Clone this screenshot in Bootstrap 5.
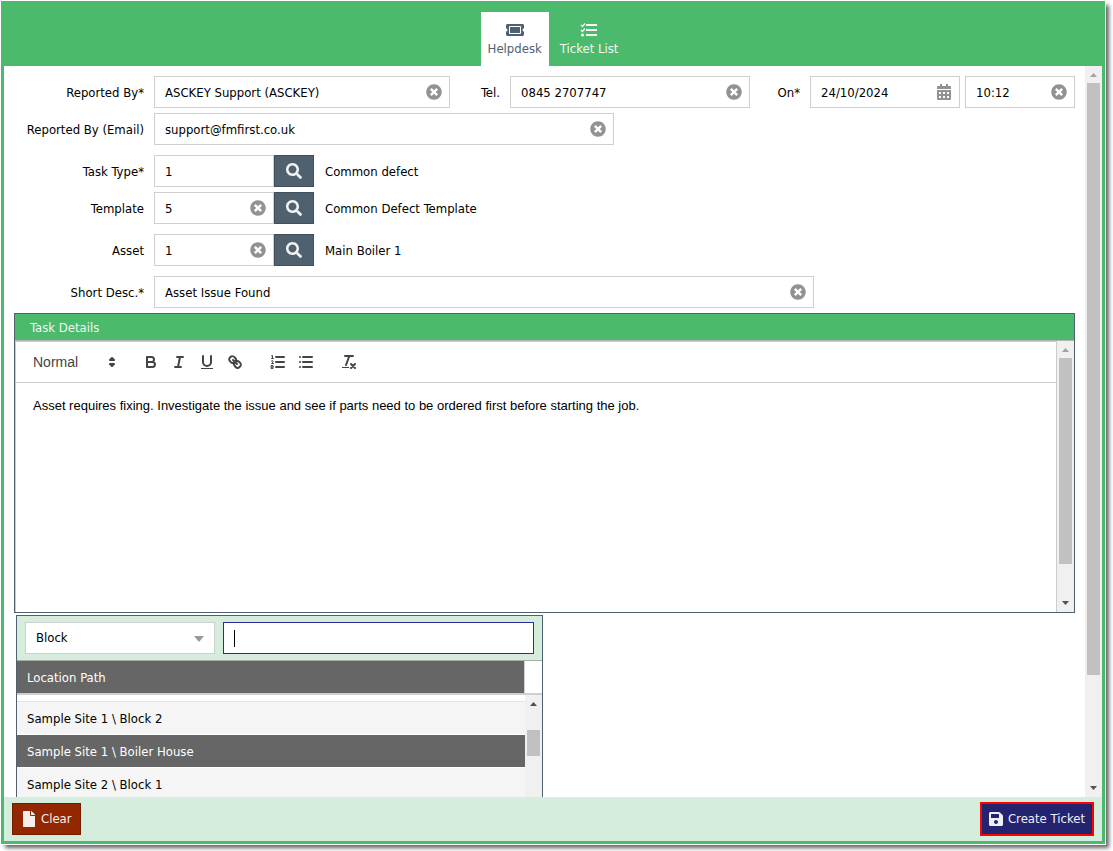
<!DOCTYPE html>
<html lang="en">
<head>
<meta charset="utf-8">
<meta name="viewport" content="width=device-width, initial-scale=1">
<title>Helpdesk</title>
<link rel="stylesheet" href="https://cdn.jsdelivr.net/npm/bootstrap@5.3.0/dist/css/bootstrap.min.css">
<style>
:root { --green: #4bba6c; --mint: #d5eddd; --slate: #4f616f; --line: #cfcfcf; --icon: #929292; }
body { height: 100vh; padding: 1px 8px 7px 1px; background: #fff; color: #000; overflow: hidden;
  font-family: Tahoma, "DejaVu Sans Condensed", "Noto Sans", sans-serif; font-size: 13px; line-height: 18px; }
button, input, select { font: inherit; color: inherit; }
svg { display: block; flex: none; }
.app-frame { min-height: 0; border: 3px solid var(--green); border-top: 0; box-shadow: 0 0 0 1px #fff, 4px 4px 4px 0 #666; background: #fff; }
.app-head { background: var(--green); padding-top: 11px; gap: 4px; }
.app-tab { padding: 10px 7px 8px; gap: 2px; color: #f3f8f4; text-decoration: none; }
.app-tab.active { background: #fff; color: var(--slate); }
.app-main { min-height: 0; }
.page-area { padding: 10px 10px 0; overflow: hidden; }
.form-line { display: grid; grid-template-columns: 130px minmax(0, 1fr); column-gap: 10px; align-items: center; margin-bottom: 10px; }
.form-line.tight { margin-bottom: 5px; }
.form-line > label, .label-cell { text-align: right; }
.form-line label, .look-note { padding-top: 1px; }
.first-line { grid-template-columns: minmax(0, 1fr) 40px 240px 40px 150px 105px; display: grid; column-gap: 10px; align-items: center; }
.first-line .time-box { margin-left: -5px; }
.field-box { display: flex; align-items: center; height: 32px; border: 1px solid var(--line); background: #fff; }
.field-box input { flex: 1 1 0; min-width: 0; height: 30px; border: 0; padding: 0 0 0 10px; outline: 0; background: transparent; }
.icon-btn { border: 0; background: transparent; padding: 0 7px; color: var(--icon); }
.email-box { max-width: 460px; }
.desc-box { max-width: 660px; }
.code-box { width: 120px; }
.look-btn { width: 40px; height: 32px; border: 1px solid #414f5c; background: var(--slate); color: #f3f3f3; padding: 0 11px; margin-right: 11px; }
.sbar { width: 17px; background: #f0f0f0; }
.sbar-track { min-height: 0; padding: 0 2px; }
.sbar-thumb { background: #c1c1c1; }
.sbar svg { width: 17px; height: 17px; fill: #505050; }
.sbar svg.idle { fill: #a3a3a3; }
.editor-card { border: 1px solid var(--slate); margin-top: -5px; }
.editor-title { background: var(--green); color: #eef7f0; padding: 5px 15px 3px; border-bottom: 1px solid #b4b4b4; margin: 0; font-size: 13px; line-height: 18px; font-weight: 400; }
.editor-pane { height: 271px; }
.editor-inner { border: solid #ccc; border-width: 0 1px; }
.editor-tools { border: solid #ccc; border-width: 1px 0; padding: 8px; color: #444; }
.editor-tools select { width: 98px; height: 24px; padding: 0 9px; border: 0; appearance: none; background: transparent; font: 14px "Liberation Sans", Arial, sans-serif; }
.size-pick { position: relative; margin-right: 15px; }
.size-pick svg { position: absolute; right: 1px; top: 3px; pointer-events: none; }
.tool-set { margin-right: 15px; }
.tool-set button { border: 0; background: transparent; padding: 3px 5px; width: 28px; height: 24px; color: inherit; }
.tool-svg { width: 18px; height: 18px; fill: none; stroke: currentColor; stroke-width: 2; stroke-linecap: round; stroke-linejoin: round; }
.editor-text { padding: 14px 17px; font: 13px/18px "Liberation Sans", Arial, sans-serif; outline: 0; }
.loc-card { width: 527px; margin: 2px 0 0 2px; border: 1px solid var(--slate); }
.loc-filter { background: var(--mint); padding: 6px 8px; border-bottom: 1px solid #aaa; gap: 8px; }
.loc-kind { position: relative; width: 190px; }
.loc-kind select { width: 100%; height: 32px; border: 1px solid var(--line); background: #fff; appearance: none; padding: 0 10px; outline: 0; }
.loc-kind svg { position: absolute; right: 11px; top: 14px; fill: #999; pointer-events: none; }
.loc-find { position: relative; }
.loc-find input { width: 100%; height: 32px; border: 1px solid #2b2b96; padding: 0 10px; outline: 0; caret-color: transparent; background: #fff; }
.loc-find i { position: absolute; left: 11px; top: 8px; width: 1px; height: 17px; background: #000; }
.loc-table { width: 100%; border-collapse: separate; border-spacing: 0; }
.loc-table th { background: #666; color: #fff; font-weight: 400; height: 34px; padding: 2px 10px 0; border-bottom: 2px solid var(--line); }
.loc-table td { height: 33px; padding: 2px 10px 0; background: #f5f5f5; border-bottom: 1px solid #fff; }
.loc-table .gap-row td { height: 7px; background: #fff; border-bottom: 1px solid #e4e4e4; padding: 0; }
.loc-table .picked td { background: #666; color: #fff; }
.loc-corner { height: 34px; border-bottom: 2px solid var(--line); border-left: 1px solid var(--line); margin-left: -1px; background: #fff; }
.loc-track { padding-top: 18px; }
.app-foot { background: var(--mint); padding: 5px 8px; height: 44px; }
.act-btn { border-radius: 0; gap: 6px; height: 32px; padding: 0 8px 0 10px; font-size: 13px; line-height: 18px; }
.act-clear, .act-clear:hover { background: #932700; border: 1px solid #741e00; color: #f5eeee; }
.act-save, .act-save:hover { height: 34px; padding: 0 7px; background: #232370; border: 2px solid #f00; color: #efeff7; gap: 5px; }
</style>
</head>
<body class="d-flex flex-column">
<svg class="d-none" aria-hidden="true">
  <symbol id="i-x" viewBox="0 0 512 512"><path d="M256 8C119 8 8 119 8 256s111 248 248 248 248-111 248-248S393 8 256 8zm121.600 313.100c4.700 4.700 4.700 12.300 0 17L338 377.600c-4.700 4.700-12.300 4.700-17 0L256 312l-65.100 65.600c-4.700 4.700-12.300 4.700-17 0L134.400 338c-4.700-4.700-4.700-12.300 0-17l65.600-65-65.600-65.100c-4.700-4.700-4.700-12.300 0-17l39.600-39.600c4.700-4.700 12.300-4.700 17 0l65 65.700 65.100-65.600c4.700-4.700 12.300-4.700 17 0l39.600 39.600c4.700 4.700 4.700 12.300 0 17L312 256l65.600 65.100z"/></symbol>
  <symbol id="i-find" viewBox="0 0 512 512"><path d="M505 442.700L405.300 343c-4.500-4.500-10.600-7-17-7H372c27.600-35.300 44-79.700 44-128C416 93.100 322.900 0 208 0S0 93.100 0 208s93.100 208 208 208c48.300 0 92.700-16.400 128-44v16.300c0 6.400 2.500 12.500 7 17l99.700 99.700c9.400 9.400 24.600 9.400 33.900 0l28.300-28.300c9.400-9.400 9.400-24.600.1-34zM208 336c-70.700 0-128-57.200-128-128 0-70.700 57.200-128 128-128 70.700 0 128 57.200 128 128 0 70.700-57.200 128-128 128z"/></symbol>
  <symbol id="s-up" viewBox="0 0 17 17"><path d="M5 11h7L8.500 7z"/></symbol>
  <symbol id="s-down" viewBox="0 0 17 17"><path d="M5 6h7L8.500 10z"/></symbol>
</svg>

<div class="app-frame d-flex flex-column flex-grow-1 w-100">
  <nav class="app-head d-flex justify-content-center">
    <a href="#" class="app-tab active d-flex flex-column align-items-center" aria-current="page">
      <svg width="18" height="16" viewBox="0 0 576 512" fill="currentColor"><path d="M128 160h320v192H128V160zm400 96c0 26.510 21.490 48 48 48v96c0 26.510-21.490 48-48 48H48c-26.510 0-48-21.490-48-48v-96c26.510 0 48-21.490 48-48s-21.490-48-48-48v-96c0-26.510 21.490-48 48-48h480c26.510 0 48 21.490 48 48v96c-26.510 0-48 21.490-48 48zm-48-104c0-13.255-10.745-24-24-24H120c-13.255 0-24 10.745-24 24v208c0 13.255 10.745 24 24 24h336c13.255 0 24-10.745 24-24V152z"/></svg>
      <span>Helpdesk</span>
    </a>
    <a href="#" class="app-tab d-flex flex-column align-items-center">
      <svg width="18" height="16" viewBox="0 0 18 16" fill="currentColor"><rect x="6" y="2" width="11" height="2"/><rect x="6" y="7" width="11" height="2"/><rect x="6" y="12" width="11" height="2"/><circle cx="2.500" cy="13" r="1.600"/><path d="M1 3l1.500 1.500L5 1.500M1 8l1.500 1.500L5 6.500" fill="none" stroke="currentColor" stroke-width="1.400"/></svg>
      <span>Ticket List</span>
    </a>
  </nav>

  <main class="app-main d-flex flex-grow-1">
    <form class="page-area flex-grow-1" id="ticket">
      <div class="form-line tight">
        <label for="by">Reported By*</label>
        <div class="first-line">
          <div class="field-box"><input id="by" value="ASCKEY Support (ASCKEY)"><button type="button" class="icon-btn" aria-label="Clear reporter"><svg width="16" height="16" fill="currentColor"><use href="#i-x"/></svg></button></div>
          <label class="label-cell" for="tel">Tel.</label>
          <div class="field-box"><input id="tel" value="0845 2707747"><button type="button" class="icon-btn" aria-label="Clear telephone"><svg width="16" height="16" fill="currentColor"><use href="#i-x"/></svg></button></div>
          <label class="label-cell" for="day">On*</label>
          <div class="field-box"><input id="day" value="24/10/2024"><button type="button" class="icon-btn" aria-label="Open calendar"><svg width="16" height="16" viewBox="0 0 16 16" fill="currentColor"><path fill-rule="evenodd" d="M4 0h2v2h4V0h2v2h2a1 1 0 0 1 1 1v2H1V3a1 1 0 0 1 1-1h2zM1 6h14v9a1 1 0 0 1-1 1H2a1 1 0 0 1-1-1zM3 8v2h2V8zm4 0v2h2V8zm4 0v2h2V8zM3 12v2h2v-2zm4 0v2h2v-2zm4 0v2h2v-2z"/></svg></button></div>
          <div class="field-box time-box"><input id="time" aria-label="Time" value="10:12"><button type="button" class="icon-btn" aria-label="Clear time"><svg width="16" height="16" fill="currentColor"><use href="#i-x"/></svg></button></div>
        </div>
      </div>
      <div class="form-line">
        <label for="mail">Reported By (Email)</label>
        <div class="field-box email-box"><input id="mail" value="support@fmfirst.co.uk"><button type="button" class="icon-btn" aria-label="Clear email"><svg width="16" height="16" fill="currentColor"><use href="#i-x"/></svg></button></div>
      </div>
      <div class="form-line tight">
        <label for="type">Task Type*</label>
        <div class="d-flex align-items-center"><div class="field-box code-box"><input id="type" value="1"></div><button type="button" class="look-btn" aria-label="Find task type"><svg width="16" height="16" fill="currentColor"><use href="#i-find"/></svg></button><span class="look-note">Common defect</span></div>
      </div>
      <div class="form-line">
        <label for="tpl">Template</label>
        <div class="d-flex align-items-center"><div class="field-box code-box"><input id="tpl" value="5"><button type="button" class="icon-btn" aria-label="Clear template"><svg width="16" height="16" fill="currentColor"><use href="#i-x"/></svg></button></div><button type="button" class="look-btn" aria-label="Find template"><svg width="16" height="16" fill="currentColor"><use href="#i-find"/></svg></button><span class="look-note">Common Defect Template</span></div>
      </div>
      <div class="form-line">
        <label for="asset">Asset</label>
        <div class="d-flex align-items-center"><div class="field-box code-box"><input id="asset" value="1"><button type="button" class="icon-btn" aria-label="Clear asset"><svg width="16" height="16" fill="currentColor"><use href="#i-x"/></svg></button></div><button type="button" class="look-btn" aria-label="Find asset"><svg width="16" height="16" fill="currentColor"><use href="#i-find"/></svg></button><span class="look-note">Main Boiler 1</span></div>
      </div>
      <div class="form-line">
        <label for="desc">Short Desc.*</label>
        <div class="field-box desc-box"><input id="desc" value="Asset Issue Found"><button type="button" class="icon-btn" aria-label="Clear description"><svg width="16" height="16" fill="currentColor"><use href="#i-x"/></svg></button></div>
      </div>

      <section class="editor-card">
        <h2 class="editor-title">Task Details</h2>
        <div class="editor-pane d-flex">
          <div class="editor-inner flex-grow-1">
            <div class="editor-tools d-flex">
              <div class="size-pick"><select aria-label="Text style"><option>Normal</option></select>
                <svg class="tool-svg" viewBox="0 0 18 18"><path fill="currentColor" d="M7 11l2 2 2-2zM7 7l2-2 2 2z"/></svg></div>
              <div class="tool-set d-flex">
                <button type="button" aria-label="Bold"><svg class="tool-svg" viewBox="0 0 18 18"><path d="M5 4h4.500a2.500 2.500 0 0 1 0 5H5zM5 9h5.500a2.500 2.500 0 0 1 0 5H5z"/></svg></button>
                <button type="button" aria-label="Italic"><svg class="tool-svg" viewBox="0 0 18 18"><path d="M7 4h6M5 14h6M8 14l2-10"/></svg></button>
                <button type="button" aria-label="Underline"><svg class="tool-svg" viewBox="0 0 18 18"><path d="M5 3v6a4 4 0 0 0 8 0V3"/><rect x="3" y="15" width="12" height="1" fill="currentColor" stroke="none"/></svg></button>
                <button type="button" aria-label="Link"><svg class="tool-svg" viewBox="0 0 18 18"><path d="M7 7l4 4M8.900 4.577a3.476 3.476 0 0 1 .36 4.679A3.476 3.476 0 0 1 4.577 8.900C3.185 7.500 2.035 6.400 4.217 4.217S7.500 3.185 8.900 4.577zM13.423 9.100a3.476 3.476 0 0 0-4.679-.36 3.476 3.476 0 0 0 .36 4.679c1.392 1.392 2.500 2.542 4.679.36S14.815 10.500 13.423 9.100z"/></svg></button>
              </div>
              <div class="tool-set d-flex">
                <button type="button" aria-label="Numbered list"><svg class="tool-svg" viewBox="0 0 18 18"><path d="M7 4h8M7 9h8M7 14h8"/><path stroke-width="1" d="M2.500 3l1-.5v3M2.500 5.500h2M2.500 8q1.500-1 1.700 0t-1.700 2.500h2M2.500 12.500h1.500v3H2.500zM2.500 14h1.500"/></svg></button>
                <button type="button" aria-label="Bulleted list"><svg class="tool-svg" viewBox="0 0 18 18"><path d="M6 4h9M6 9h9M6 14h9M3 4h0M3 9h0M3 14h0"/></svg></button>
              </div>
              <div class="tool-set d-flex">
                <button type="button" aria-label="Clear formatting"><svg class="tool-svg" viewBox="0 0 18 18"><path d="M5 3h8M6 12l3.350-9M11 11l4 4M15 11l-4 4"/><rect x="2" y="14" width="7" height="1" fill="currentColor" stroke="none"/></svg></button>
              </div>
            </div>
            <div class="editor-text" contenteditable="true" role="textbox" aria-label="Task details" spellcheck="false">Asset requires fixing. Investigate the issue and see if parts need to be ordered first before starting the job.</div>
          </div>
          <div class="sbar d-flex flex-column" aria-hidden="true">
            <svg class="idle"><use href="#s-up"/></svg>
            <div class="sbar-track flex-grow-1"><div class="sbar-thumb" style="height:87%"></div></div>
            <svg><use href="#s-down"/></svg>
          </div>
        </div>
      </section>

      <section class="loc-card">
        <div class="loc-filter d-flex">
          <div class="loc-kind"><select aria-label="Location kind"><option>Block</option></select><svg width="10" height="6"><path d="M0 0h10L5 6z"/></svg></div>
          <div class="loc-find flex-grow-1"><input aria-label="Search locations"><i></i></div>
        </div>
        <div class="d-flex">
          <div class="flex-grow-1">
            <table class="loc-table">
              <thead><tr><th scope="col">Location Path</th></tr></thead>
              <tbody>
                <tr class="gap-row"><td></td></tr>
                <tr><td>Sample Site 1 \ Block 2</td></tr>
                <tr class="picked"><td>Sample Site 1 \ Boiler House</td></tr>
                <tr><td>Sample Site 2 \ Block 1</td></tr>
              </tbody>
            </table>
          </div>
          <div class="sbar d-flex flex-column" aria-hidden="true">
            <div class="loc-corner"></div>
            <svg><use href="#s-up"/></svg>
            <div class="sbar-track loc-track flex-grow-1"><div class="sbar-thumb" style="height:26px"></div></div>
          </div>
        </div>
      </section>
    </form>
    <div class="sbar d-flex flex-column flex-shrink-0" aria-hidden="true">
      <svg class="idle"><use href="#s-up"/></svg>
      <div class="sbar-track flex-grow-1"><div class="sbar-thumb" style="height:85%"></div></div>
      <svg><use href="#s-down"/></svg>
    </div>
  </main>

  <footer class="app-foot d-flex justify-content-between align-items-center">
    <button type="reset" form="ticket" class="btn act-btn act-clear d-flex align-items-center"><svg width="12" height="16" viewBox="0 0 384 512" fill="currentColor"><path d="M224 136V0H24C10.700 0 0 10.700 0 24v464c0 13.300 10.700 24 24 24h336c13.300 0 24-10.700 24-24V160H248c-13.200 0-24-10.800-24-24zm160-14.100v6.100H256V0h6.100c6.400 0 12.500 2.500 17 7l97.900 98c4.500 4.500 7 10.600 7 16.900z"/></svg>Clear</button>
    <button type="submit" form="ticket" class="btn act-btn act-save d-flex align-items-center"><svg width="14" height="16" viewBox="0 0 448 512" fill="currentColor"><path d="M433.941 129.941l-83.882-83.882A48 48 0 0 0 316.118 32H48C21.490 32 0 53.490 0 80v352c0 26.510 21.490 48 48 48h352c26.510 0 48-21.490 48-48V163.882a48 48 0 0 0-14.059-33.941zM224 416c-35.346 0-64-28.654-64-64 0-35.346 28.654-64 64-64s64 28.654 64 64c0 35.346-28.654 64-64 64zm96-304.520V212c0 6.627-5.373 12-12 12H76c-6.627 0-12-5.373-12-12V108c0-6.627 5.373-12 12-12h228.520c3.183 0 6.235 1.264 8.485 3.515l3.480 3.480A11.996 11.996 0 0 1 320 111.480z"/></svg>Create Ticket</button>
  </footer>
</div>
<script src="https://cdn.jsdelivr.net/npm/bootstrap@5.3.0/dist/js/bootstrap.bundle.min.js"></script>
</body>
</html>
